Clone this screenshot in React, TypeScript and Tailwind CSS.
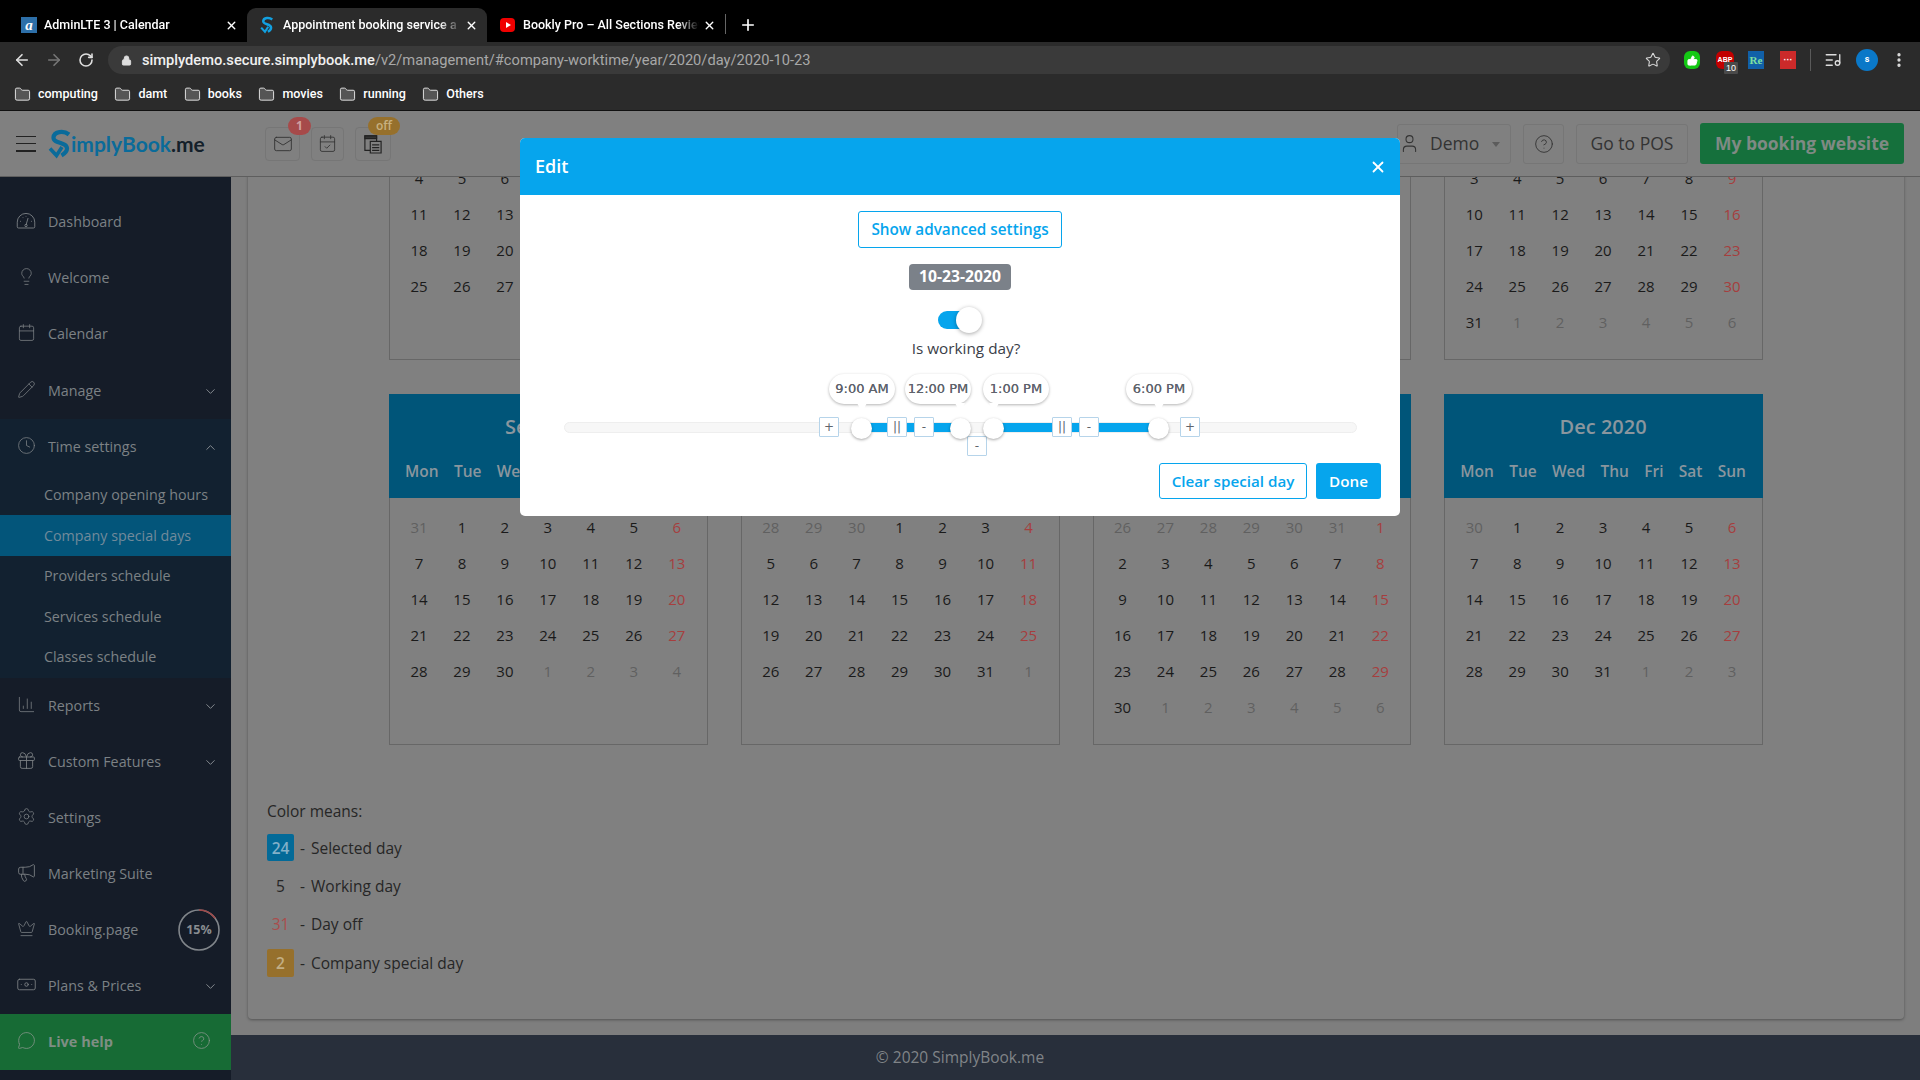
import React from "react";
import {
  ArrowLeft, ArrowRight, RotateCw, Lock, Star, X, Plus, Folder, Mail, CalendarCheck, Lightbulb, Calendar,
  Pencil, Clock, ChevronDown, ChevronUp, ChartColumn, Gift, Settings, Megaphone, Crown, Banknote, MessageCircle,
  CircleHelp, User, ListMusic, MoreVertical, ThumbsUp,
} from "lucide-react";

const OPEN = "font-['Open_Sans',sans-serif]";

function LogoS({ className }: { className: string }) {
  return (
    <svg viewBox="0 0 24 30" className={className} fill="none" stroke="currentColor" strokeWidth="4.2">
      <path d="M21 5.5C16 1.5 6 2 5.5 8.5C5 15 19 12.5 19 19.5C19 23 16 25 13.5 26.5" />
      <path d="M2 19.5L8.5 26.5L14 18" strokeWidth="3.6" />
    </svg>
  );
}

function Tab(props: { icon: React.ReactNode; title: string; active?: boolean; width: string; textWidth: string }) {
  return (
    <div className={`flex h-[34px] items-center pl-[13px] ${props.width} ${props.active ? "rounded-t-[9px] bg-[#2b2b2b]" : ""}`}>
      <div className="flex w-[23px] shrink-0 items-center">{props.icon}</div>
      <span className={`overflow-hidden whitespace-nowrap text-[12.5px] font-medium text-white ${props.textWidth} [mask-image:linear-gradient(to_right,black_88%,transparent)]`}>
        {props.title}
      </span>
      <X size={13} strokeWidth={2.6} className="ml-auto mr-[9px] text-white" />
    </div>
  );
}

function TabBar() {
  return (
    <div className="flex h-[42px] items-end bg-black font-['Roboto',sans-serif]">
      <div className="mb-0 flex items-end pl-[8px]">
        <Tab
          width="w-[239px]"
          textWidth="w-[160px]"
          icon={<span className="flex h-[16px] w-[16px] items-center justify-center bg-[#2d6fa8] font-['Liberation_Serif',serif] text-[15px] font-bold italic leading-none text-white">a</span>}
          title="AdminLTE 3 | Calendar"
        />
        <Tab
          active
          width="w-[240px]"
          textWidth="w-[178px]"
          icon={<LogoS className="h-[18px] w-[14px] text-[#12a0e0]" />}
          title="Appointment booking service a"
        />
        <Tab
          width="w-[238px]"
          textWidth="w-[176px]"
          icon={
            <span className="flex h-[14px] w-[15px] items-center justify-center rounded-[4px] bg-[#f00000]">
              <span className="ml-[1px] border-y-[3px] border-l-[5px] border-y-transparent border-l-white" />
            </span>
          }
          title="Bookly Pro – All Sections Review"
        />
      </div>
      <div className="mb-[8px] h-[20px] w-px bg-[#666]" />
      <Plus size={18} strokeWidth={2.2} className="mb-[8px] ml-[13px] text-white" />
    </div>
  );
}

function ExtIcons() {
  return (
    <div className="flex items-center pl-[14px]">
      <span className="flex h-[18px] w-[16px] items-center justify-center rounded-[6px] bg-[#14c814]">
        <ThumbsUp size={11} fill="white" className="text-white" />
      </span>
      <span className="relative ml-[16px] flex h-[18px] w-[18px] items-center justify-center rounded-[6px] bg-[#c20000] font-['Liberation_Sans',sans-serif] text-[7px] font-bold text-white">
        ABP
        <span className="absolute left-[8px] top-[11px] rounded-[1px] bg-[#4a4a4a] px-[2px] text-[9px] font-normal leading-[12px] text-white">10</span>
      </span>
      <span className="ml-[14px] flex h-[18px] w-[16px] items-center justify-center bg-[#1160a8] font-['Liberation_Serif',serif] text-[11px] font-bold text-[#7ee0a0]">Re</span>
      <span className="ml-[16px] flex h-[18px] w-[16px] items-center justify-center bg-[#cc2a2a] font-['Liberation_Sans',sans-serif] text-[9px] font-bold leading-none text-white">···</span>
      <span className="ml-[14px] h-[22px] w-px bg-[#5a5a5a]" />
      <ListMusic size={18} strokeWidth={1.8} className="ml-[13px] text-[#dddddd]" />
      <span className="ml-[14px] flex h-[22px] w-[22px] items-center justify-center rounded-full bg-[#0a78c8] font-['Roboto',sans-serif] text-[9px] font-bold text-white">s</span>
      <MoreVertical size={18} strokeWidth={2.4} className="ml-[12px] mr-[12px] text-[#dddddd]" />
    </div>
  );
}

function Toolbar() {
  return (
    <div className="flex h-[36px] items-center bg-[#2b2b2b]">
      <ArrowLeft size={18} strokeWidth={2.2} className="ml-[13px] text-[#dedede]" />
      <ArrowRight size={18} strokeWidth={2.2} className="ml-[14px] text-[#777777]" />
      <RotateCw size={16} strokeWidth={2.4} className="ml-[15px] text-[#dedede]" />
      <div className="ml-[14px] flex h-[28px] flex-1 items-center rounded-[14px] bg-[#3a3a3a] pl-[13px] pr-[9px]">
        <Lock size={11} fill="#dedede" className="text-[#dedede]" />
        <span className="ml-[10px] mt-[1px] font-['Roboto',sans-serif] text-[14.66px] font-medium text-[#f0f0f0]">simplydemo.secure.simplybook.me</span>
        <span className="mt-[1px] font-['Roboto',sans-serif] text-[14.66px] text-[#a8a8a8]">/v2/management/#company-worktime/year/2020/day/2020-10-23</span>
        <Star size={16} strokeWidth={1.6} className="ml-auto text-[#d8d8d8]" />
      </div>
      <ExtIcons />
    </div>
  );
}

function Bookmarks() {
  const names = ["computing", "damt", "books", "movies", "running", "Others"];
  return (
    <div className="flex h-[33px] items-center gap-[16.5px] border-b border-[#111] bg-[#2b2b2b] pl-[14px] font-['Roboto',sans-serif]">
      {names.map((n) => (
        <div key={n} className="flex items-center gap-[7px]">
          <Folder size={17} strokeWidth={1.4} fill="#555" className="text-[#e0e0e0]" />
          <span className="text-[12.5px] font-medium text-white">{n}</span>
        </div>
      ))}
    </div>
  );
}

function IconBtn({ w, children }: { w: string; children: React.ReactNode }) {
  return <div className={`relative flex h-[34px] items-center justify-center rounded-[4px] border border-[#767676] ${w}`}>{children}</div>;
}

function AppHeader() {
  return (
    <header className={`flex h-[66px] shrink-0 items-center border-b border-[#5e5e5e] bg-[#808080] ${OPEN}`}>
      <div className="ml-[16px] flex h-[16px] w-[20px] flex-col justify-between">
        <span className="h-[1.5px] bg-[#222]" />
        <span className="h-[1.5px] bg-[#222]" />
        <span className="h-[1.5px] bg-[#222]" />
      </div>
      <div className="ml-[12px] flex w-[181px] items-center">
        <LogoS className="h-[30px] w-[24px] text-[#0a6b9a]" />
        <span className="-ml-[1px] font-['Lato',sans-serif] text-[21px] font-bold leading-none text-[#0a6b9a]">implyBook</span>
        <span className="font-['Lato',sans-serif] text-[21px] font-bold leading-none text-[#14202a]">.me</span>
      </div>
      <div className="ml-[36px] flex items-center gap-[11px]">
        <IconBtn w="w-[35px]">
          <Mail size={20} strokeWidth={1.1} className="text-[#333]" />
          <span className="absolute -top-[11px] left-[22px] flex h-[18px] w-[23px] items-center justify-center rounded-full bg-[#a64a4a] text-[12px] font-bold text-[#d0a0a0]">1</span>
        </IconBtn>
        <IconBtn w="w-[33px]">
          <CalendarCheck size={19} strokeWidth={1.1} className="text-[#333]" />
        </IconBtn>
        <IconBtn w="w-[36px]">
          <svg viewBox="0 0 20 22" className="h-[20px] w-[18px]" fill="none" stroke="#222" strokeWidth="1.3">
            <path d="M1 2h13v16H1z" />
            <path d="M1 2h13v3H1z" fill="#333" />
            <path d="M7 8h12v13H7z" fill="#808080" />
            <path d="M9 12h8M9 15h8M9 18h8" />
          </svg>
          <span className="absolute -top-[11px] left-[12px] flex h-[18px] w-[32px] items-center justify-center rounded-full bg-[#96702c] text-[12px] font-semibold text-[#c8b080]">off</span>
        </IconBtn>
      </div>
      <div className="ml-auto mr-[16px] flex items-center gap-[12px] text-[17.5px] text-[#333]">
        <div className="flex h-[40px] w-[114px] items-center rounded-[3px] border border-[#767676] pl-[1px]">
          <User size={21} strokeWidth={1.2} />
          <span className="ml-[10px] text-[17.5px]">Demo</span>
          <span className="ml-[13px] mt-[2px] border-x-[4px] border-t-[5px] border-x-transparent border-t-[#5c5c5c]" />
        </div>
        <div className="flex h-[40px] w-[41px] items-center justify-center rounded-[3px] border border-[#767676]">
          <CircleHelp size={20} strokeWidth={1.1} />
        </div>
        <div className="flex h-[40px] w-[112px] items-center justify-center rounded-[3px] border border-[#767676]">Go to POS</div>
        <div className="flex h-[41px] w-[204px] items-center justify-center rounded-[3px] bg-[#15703c] font-bold text-[#7f8a84]">My booking website</div>
      </div>
    </header>
  );
}

const CHEV = "ml-auto mr-[13px] text-[#8a8f94]";

function NavItem({ icon, label, right }: { icon: React.ReactNode; label: string; right?: React.ReactNode }) {
  return (
    <div className="flex h-[56px] items-center text-[14.3px] text-[#7c8185]">
      <span className="flex w-[48px] items-center justify-center pb-[4px] pl-[4px]">{icon}</span>
      <span>{label}</span>
      {right}
    </div>
  );
}

function DashIcon() {
  return (
    <svg viewBox="0 0 24 20" className="h-[17px] w-[20px] text-[#7b8084]" fill="none" stroke="currentColor" strokeWidth="1.1">
      <path d="M3 19a1.5 1.5 0 0 1-1.5-1.5v-5.5a10.5 10.5 0 0 1 21 0v5.5a1.5 1.5 0 0 1-1.5 1.5z" />
      <path d="M12 15.5L14.5 7" />
      <circle cx="12" cy="16" r="1.4" />
      <path d="M5 11h1M18 11h1M8 6.5h.8M12 4.5v.8" />
    </svg>
  );
}

function Sidebar() {
  const ic = { size: 19, strokeWidth: 1, className: "text-[#7b8084]" };
  const wide = { size: 21, strokeWidth: 1, className: "text-[#7b8084]" };
  const chev = { size: 15, strokeWidth: 1.5, className: CHEV };
  const subs = ["Company opening hours", "Company special days", "Providers schedule", "Services schedule", "Classes schedule"];
  return (
    <aside className={`flex w-[231px] shrink-0 flex-col bg-[#151c28] pt-[17px] ${OPEN}`}>
      <NavItem icon={<DashIcon />} label="Dashboard" />
      <NavItem icon={<Lightbulb {...ic} />} label="Welcome" />
      <NavItem icon={<Calendar {...ic} />} label="Calendar" />
      <div className="mt-[1px]">
        <NavItem icon={<Pencil {...ic} />} label="Manage" right={<ChevronDown {...chev} />} />
      </div>
      <div className="h-[259px] bg-[#122130]">
        <NavItem icon={<Clock {...ic} />} label="Time settings" right={<ChevronUp {...chev} />} />
        {subs.map((s) => (
          <div key={s} className={`flex h-[40.4px] items-center pl-[44px] text-[14.3px] text-[#7c8185] ${s === "Company special days" ? "bg-[#03557a] text-[#718a9a]" : ""}`}>
            {s}
          </div>
        ))}
      </div>
      <NavItem icon={<ChartColumn {...ic} />} label="Reports" right={<ChevronDown {...chev} />} />
      <NavItem icon={<Gift {...wide} />} label="Custom Features" right={<ChevronDown {...chev} />} />
      <NavItem icon={<Settings {...ic} />} label="Settings" />
      <NavItem icon={<Megaphone {...wide} />} label="Marketing Suite" />
      <NavItem
        icon={<Crown {...ic} />}
        label="Booking.page"
        right={
          <span className="relative ml-auto mr-[11px] flex h-[42px] w-[42px] items-center justify-center text-[12.5px] font-bold text-[#888c90]">
            <svg viewBox="0 0 42 42" className="absolute inset-0" fill="none" strokeWidth="1.6">
              <circle cx="21" cy="21" r="20" stroke="#80858a" />
              <path d="M21 1A20 20 0 0 1 37.2 9.3" stroke="#a04a4a" />
            </svg>
            15%
          </span>
        }
      />
      <NavItem icon={<Banknote {...wide} />} label="Plans & Prices" right={<ChevronDown {...chev} />} />
      <div className="flex h-[56px] items-center bg-[#176b35] text-[14.5px] font-bold text-[#7f8e84]">
        <span className="flex w-[48px] items-center justify-center pb-[4px] pl-[4px]">
          <MessageCircle size={19} strokeWidth={1} className="text-[#85968a]" />
        </span>
        Live help
        <CircleHelp size={19} strokeWidth={1} className="ml-auto mr-[20px] mb-[4px] text-[#85968a]" />
      </div>
    </aside>
  );
}

function monthCells(year: number, month: number) {
  const first = new Date(Date.UTC(year, month, 1));
  const offset = (first.getUTCDay() + 6) % 7;
  const count = new Date(Date.UTC(year, month + 1, 0)).getUTCDate();
  const total = Math.ceil((offset + count) / 7) * 7;
  const cells: { d: number; cur: boolean }[] = [];
  for (let i = 0; i < total; i++) {
    const dt = new Date(Date.UTC(year, month, 1 + i - offset));
    cells.push({ d: dt.getUTCDate(), cur: dt.getUTCMonth() === month });
  }
  return cells;
}

function MonthBox({ title, month }: { title: string; month: number }) {
  const days = ["Mon", "Tue", "Wed", "Thu", "Fri", "Sat", "Sun"];
  const cells = monthCells(2020, month);
  return (
    <div className="h-[351px]">
      <div className="h-[104px] bg-[#005579] pl-[16px] pr-[17px] pt-[18px] text-[#8a969e]">
        <div className="text-center text-[20px] font-semibold leading-[30px]">{title}</div>
        <div className="mt-[18px] flex justify-between text-[15.5px] font-semibold leading-[22px]">
          {days.map((d) => <span key={d}>{d}</span>)}
        </div>
      </div>
      <div className="h-[247px] border-x border-b border-[#676767] pl-[7.5px] pr-[8.5px] pt-[11px]">
        <div className="grid grid-cols-7 text-center text-[15px]">
          {cells.map((c, i) => {
            const sun = i % 7 === 6;
            const color = !c.cur ? "text-[#606060]" : sun ? "text-[#a63e3e]" : "text-[#1a1a1a]";
            return <span key={i} className={`h-[35.9px] leading-[36px] ${color}`}>{c.d}</span>;
          })}
        </div>
      </div>
    </div>
  );
}

function LegendRow({ mark, text }: { mark: React.ReactNode; text: string }) {
  return (
    <div className="flex h-[38.4px] items-center">
      <div className="flex w-[27px] justify-center">{mark}</div>
      <span className="ml-[6px]">-</span>
      <span className="ml-[6px]">{text}</span>
    </div>
  );
}

function Legend() {
  return (
    <div className="ml-[19px] mt-[56px] text-[15.5px] leading-[20px] text-[#262626]">
      <div>Color means:</div>
      <div className="mt-[7px]">
        <LegendRow mark={<span className="flex h-[27px] w-[27px] items-center justify-center rounded-[2px] bg-[#036a98] font-semibold text-[#82b0c8]">24</span>} text="Selected day" />
        <LegendRow mark={<span>5</span>} text="Working day" />
        <LegendRow mark={<span className="text-[#aa4c4c]">31</span>} text="Day off" />
        <LegendRow mark={<span className="flex h-[28px] w-[27px] items-center justify-center rounded-[2px] bg-[#96702c] font-semibold text-[#c2ae84]">2</span>} text="Company special day" />
      </div>
    </div>
  );
}

function Main() {
  const months: [string, number][] = [
    ["May 2020", 4], ["Jun 2020", 5], ["Jul 2020", 6], ["Aug 2020", 7],
    ["Sep 2020", 8], ["Oct 2020", 9], ["Nov 2020", 10], ["Dec 2020", 11],
  ];
  return (
    <div className={`flex min-w-0 flex-1 flex-col bg-[#7e7e7e] ${OPEN}`}>
      <div className="flex min-h-0 flex-1 flex-col justify-end overflow-hidden pb-[16px] pl-[17px] pr-[16px]">
        <div className="shrink-0 rounded-[4px] bg-[#808080] pb-[37px] shadow-[0_1px_3px_rgba(0,0,0,0.35)]">
          <div className="mx-auto grid w-[1374px] grid-cols-4 gap-x-[33px] gap-y-[34px]">
            {months.map(([t, m]) => <MonthBox key={t} title={t} month={m} />)}
          </div>
          <Legend />
        </div>
      </div>
      <footer className="flex h-[45px] shrink-0 items-center justify-center bg-[#282f3b] pr-[231px] text-[15.5px] text-[#808488]">© 2020 SimplyBook.me</footer>
    </div>
  );
}

function Tip({ pos, tail, label }: { pos: string; tail: string; label: string }) {
  return (
    <div className={`absolute top-0 flex h-[30px] w-[66px] items-center justify-center whitespace-nowrap rounded-[15px] bg-white font-['DejaVu_Sans',sans-serif] text-[13px] text-[#5e636c] shadow-[0_1px_3px_rgba(0,0,0,0.3)] [text-shadow:0_0_0.5px_#5e636c] ${pos}`}>
      {label}
      <span className={`absolute top-[29px] border-x-[5px] border-t-[9px] border-x-transparent border-t-white ${tail}`} />
    </div>
  );
}

function Knob({ pos }: { pos: string }) {
  return <span className={`absolute top-[44px] h-[21px] w-[21px] rounded-full bg-white shadow-[0_1px_3px_rgba(0,0,0,0.35)] ${pos}`} />;
}

function Mini({ pos, label }: { pos: string; label: string }) {
  return (
    <span className={`absolute flex h-[20px] w-[20px] items-center justify-center rounded-[1px] border border-[#b6d4ea] bg-white font-['DejaVu_Sans',sans-serif] text-[12px] leading-none text-[#60656c] ${pos}`}>
      {label}
    </span>
  );
}

function TimeSlider() {
  return (
    <div className="relative mt-[16px] h-[82px]">
      <div className="absolute left-[44px] top-[48px] h-[11px] w-[793px] rounded-full border border-[#eeeeee] bg-[#f7f7f7]" />
      <div className="absolute left-[342px] top-[49px] h-[9px] w-[99px] bg-[#06a5ed]" />
      <div className="absolute left-[474px] top-[49px] h-[9px] w-[165px] bg-[#06a5ed]" />
      <Tip pos="left-[309px]" tail="left-[28px]" label="9:00 AM" />
      <Tip pos="left-[385px]" tail="right-[6px]" label="12:00 PM" />
      <Tip pos="left-[463px]" tail="left-[6px]" label="1:00 PM" />
      <Tip pos="left-[606px]" tail="left-[28px]" label="6:00 PM" />
      <Mini pos="left-[299px] top-[43px]" label="+" />
      <Mini pos="left-[367px] top-[43px]" label="||" />
      <Mini pos="left-[394px] top-[43px]" label="-" />
      <Mini pos="left-[447px] top-[62px]" label="-" />
      <Mini pos="left-[532px] top-[43px]" label="||" />
      <Mini pos="left-[559px] top-[43px]" label="-" />
      <Mini pos="left-[660px] top-[43px]" label="+" />
      <Knob pos="left-[331px]" />
      <Knob pos="left-[430px]" />
      <Knob pos="left-[463px]" />
      <Knob pos="left-[628px]" />
    </div>
  );
}

function Modal() {
  return (
    <div className="absolute inset-x-0 bottom-0 top-[111px] flex items-start justify-center pt-[27px]">
      <div className={`w-[880px] overflow-hidden rounded-[5px] bg-white ${OPEN}`}>
        <div className="flex h-[57px] items-center justify-between bg-[#06a5ed] px-[15px] text-white">
          <span className="text-[18px] font-semibold">Edit</span>
          <X size={18} strokeWidth={2.4} className="-mr-[2px]" />
        </div>
        <div className="pt-[16px]">
          <div className="flex flex-col items-center">
            <button className="h-[37px] w-[204px] rounded-[3px] border border-[#06a5ed] text-[15.3px] font-semibold text-[#06a5ed]">Show advanced settings</button>
            <span className="mt-[16px] flex h-[26px] w-[102px] items-center justify-center rounded-[4px] bg-[#7b8189] text-[15.7px] font-bold text-white">10-23-2020</span>
            <div className="relative mt-[17px] h-[26px] w-[44px]">
              <span className="absolute left-0 top-[4px] h-[18px] w-[36px] rounded-full bg-[#06a5ed]" />
              <span className="absolute right-0 top-0 h-[26px] w-[26px] rounded-full bg-white shadow-[0_1px_4px_rgba(0,0,0,0.35)]" />
            </div>
            <div className="mt-[5px] translate-x-[6px] text-[15.3px] leading-[20px] text-[#3a4048]">Is working day?</div>
          </div>
          <TimeSlider />
          <div className="mt-[7px] flex justify-end gap-[9px] pb-[17px] pr-[19px] text-[15.2px] font-semibold">
            <button className="h-[36px] w-[148px] rounded-[3px] border border-[#06a5ed] text-[#06a5ed]">Clear special day</button>
            <button className="h-[36px] w-[65px] rounded-[3px] bg-[#06a5ed] text-white">Done</button>
          </div>
        </div>
      </div>
    </div>
  );
}

export default function App() {
  return (
    <div className="relative flex h-[1080px] w-[1920px] flex-col overflow-hidden">
      <TabBar />
      <Toolbar />
      <Bookmarks />
      <AppHeader />
      <div className="flex min-h-0 flex-1">
        <Sidebar />
        <Main />
      </div>
      <Modal />
    </div>
  );
}
